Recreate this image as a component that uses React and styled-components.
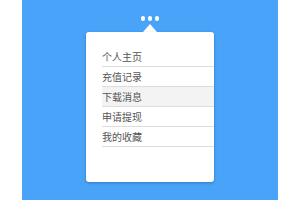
import React from "react";
import styled, { createGlobalStyle } from "styled-components";

const Global = createGlobalStyle`
  html, body { margin: 0; padding: 0; background: #fff; }
  body { width: 300px; height: 200px; overflow: hidden; }
`;

const Stage = styled.div`
  margin: 0 22px;
  height: 200px;
  background: #48a3f9;
  display: flex;
  flex-direction: column;
  align-items: center;
  padding-top: 16px;
  box-sizing: border-box;
`;

const Dots = styled.div`
  display: flex;
  gap: 2.5px;
  height: 4.5px;
`;

const Dot = styled.span`
  width: 4.5px;
  height: 4.5px;
  border-radius: 50%;
  background: #fff;
`;

const Arrow = styled.div`
  margin-top: 3.5px;
  width: 0;
  height: 0;
  border-left: 7px solid transparent;
  border-right: 7px solid transparent;
  border-bottom: 8px solid #fff;
`;

const Card = styled.div`
  width: 128px;
  height: 150px;
  background: #fff;
  border-radius: 3px;
  box-shadow: 0 1px 3px rgba(0, 0, 0, 0.25);
  padding: 15px 0 0 16px;
  box-sizing: border-box;
`;

const List = styled.ul`
  list-style: none;
  margin: 0;
  padding: 0;
`;

const Item = styled.li`
  height: 20px;
  line-height: 20px;
  box-sizing: border-box;
  border-bottom: 1px solid #dcdcdc;
  font-family: "Noto Sans CJK SC", "Noto Sans", sans-serif;
  font-size: 10px;
  color: #555;
  background: ${(p) => (p.$active ? "#f3f3f3" : "transparent")};
`;

const items = ["个人主页", "充值记录", "下载消息", "申请提现", "我的收藏"];

export default function App() {
  return (
    <>
      <Global />
      <Stage>
        <Dots>
          <Dot />
          <Dot />
          <Dot />
        </Dots>
        <Arrow />
        <Card>
          <List>
            {items.map((t, i) => (
              <Item key={t} $active={i === 2}>
                {t}
              </Item>
            ))}
          </List>
        </Card>
      </Stage>
    </>
  );
}
